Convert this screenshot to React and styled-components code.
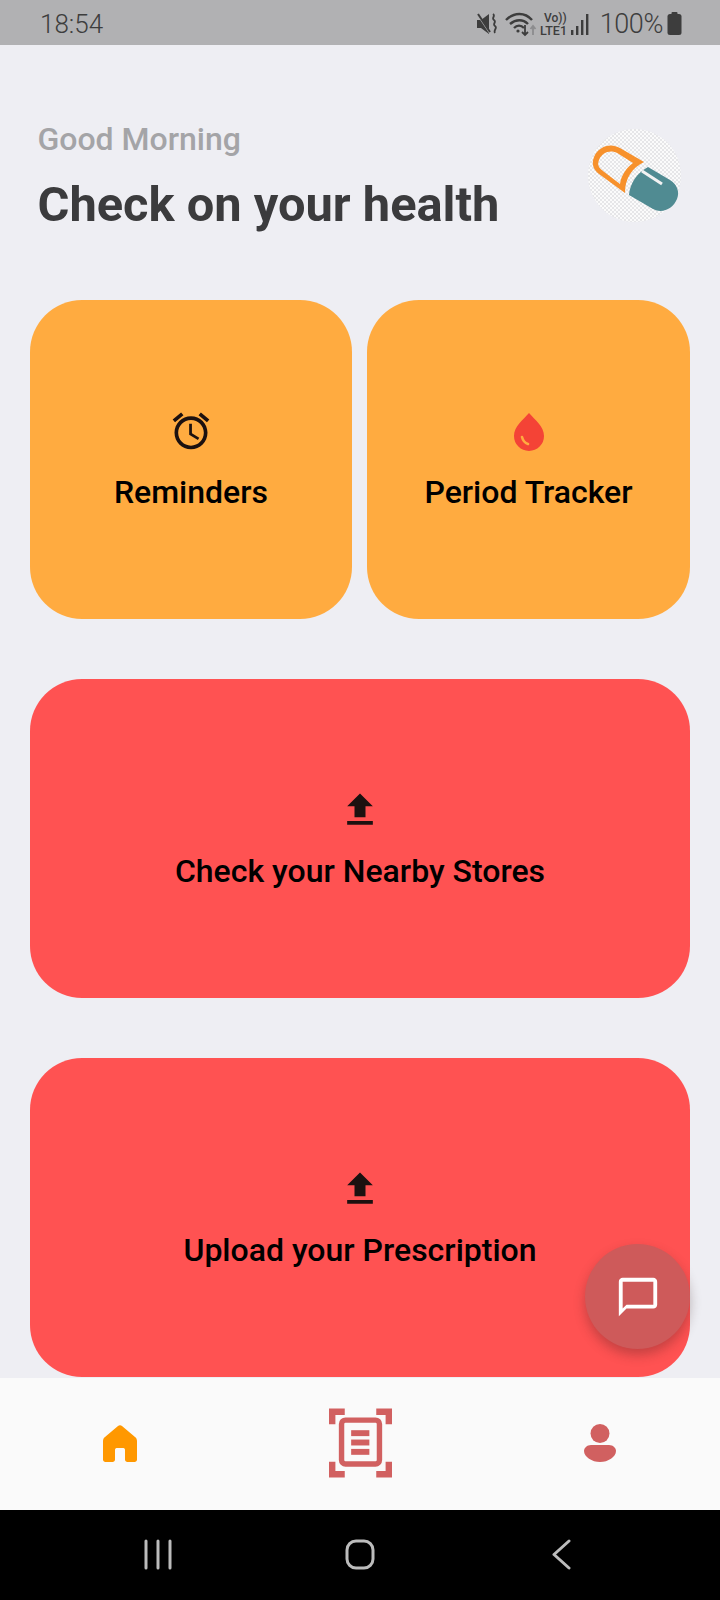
import styled, { createGlobalStyle } from "styled-components";

const GlobalStyle = createGlobalStyle`
  html, body {
    margin: 0;
    padding: 0;
    background: #eeeef3;
  }
  * {
    box-sizing: border-box;
  }
`;

const Phone = styled.div`
  width: 720px;
  height: 1600px;
  display: flex;
  flex-direction: column;
  overflow: hidden;
  font-family: Roboto, "Liberation Sans", sans-serif;
`;

const StatusBar = styled.div`
  height: 45px;
  flex: none;
  background: #b1b1b3;
  color: #3d3d3d;
  display: flex;
  align-items: center;
  justify-content: space-between;
  padding: 2px 38px 0 40px;
  font-weight: 300;
  font-size: 26px;
`;

const StatusIcons = styled.div`
  display: flex;
  align-items: center;
`;

const Percent = styled.span`
  margin: 0 4px 0 11px;
  font-size: 27px;
  letter-spacing: -0.4px;
`;

const Main = styled.main`
  position: relative;
  flex: 1;
  min-height: 0;
  background: #eeeef3;
  padding: 0 30px;
`;

const Header = styled.header`
  height: 255px;
  display: flex;
  justify-content: space-between;
  padding: 76px 9px 0 7.5px;
`;

const Greeting = styled.div`
  font-size: 32px;
  line-height: 36px;
  font-weight: 500;
  color: #a4a4a7;
`;

const Title = styled.h1`
  margin: 19px 0 0;
  font-size: 48.8px;
  line-height: 58px;
  font-weight: 700;
  color: #3b3b3d;
`;

const Avatar = styled.div`
  width: 93px;
  height: 93px;
  margin-top: 8px;
  border-radius: 50%;
  background-color: #f8f8f9;
  background-image: repeating-conic-gradient(#e6e6e8 0 25%, #fbfbfb 0 50%);
  background-size: 4px 4px;
  position: relative;
`;

const Pill = styled.svg`
  position: absolute;
  left: -18px;
  top: -13px;
  width: 120px;
  height: 120px;
`;

const Row = styled.div`
  display: grid;
  grid-template-columns: 322px 323px;
  gap: 15px;
`;

const Card = styled.div`
  height: 319px;
  margin-bottom: ${props => props.$gap || 0}px;
  border-radius: 52px;
  background: ${props => props.$color};
  display: flex;
  flex-direction: column;
  align-items: center;
  justify-content: center;
  color: #000;
`;

const CardIcon = styled.svg`
  width: 44px;
  height: 44px;
  display: block;
  fill: ${props => props.$color || "#1c1110"};
`;

const CardLabel = styled.div`
  margin-top: 21px;
  font-size: 32px;
  line-height: 36px;
  font-weight: 500;
`;

const Fab = styled.button`
  position: absolute;
  right: 30px;
  bottom: 29px;
  width: 105px;
  height: 105px;
  border: 0;
  padding: 0;
  border-radius: 50%;
  background: #ce5a5a;
  box-shadow: 0 6px 12px rgba(60, 30, 30, 0.3);
  display: flex;
  align-items: center;
  justify-content: center;
`;

const BottomNav = styled.nav`
  height: 132px;
  flex: none;
  background: #fafafa;
  display: grid;
  grid-template-columns: repeat(3, 1fr);
  align-items: center;
  justify-items: center;
  padding-bottom: 2px;
`;

const SystemNav = styled.div`
  height: 90px;
  flex: none;
  background: #000;
  display: flex;
  justify-content: space-between;
  align-items: flex-start;
  padding: 29px 144px 0 143px;
`;

const SysIcon = styled.svg`
  width: 30px;
  height: 32px;
  fill: none;
  stroke: #bcbcbc;
  stroke-width: 3;
  stroke-linecap: round;
  stroke-linejoin: round;
`;

const ALARM =
  "M22 5.72l-4.6-3.86-1.29 1.53 4.6 3.86L22 5.72zM7.88 3.39L6.6 1.86 2 5.71l1.29 1.53 4.59-3.85zM12.5 8H11v6l4.75 2.85.75-1.23-4-2.37V8zM12 4c-4.97 0-9 4.03-9 9s4.03 9 9 9 9-4.03 9-9-4.03-9-9-9zm0 16c-3.87 0-7-3.13-7-7s3.13-7 7-7 7 3.13 7 7-3.13 7-7 7z";
const UPLOAD = "M9 16h6v-6h4l-7-7-7 7h4zm-4 2h14v2H5z";
const CHAT =
  "M20 2H4c-1.1 0-2 .9-2 2v18l4-4h14c1.1 0 2-.9 2-2V4c0-1.1-.9-2-2-2zm0 14H6l-2 2V4h16v12z";

function MuteIcon() {
  return (
    <svg width="21" height="24" viewBox="0 0 21 24" fill="none" style={{ marginRight: 8 }}>
      <path d="M1 8h4l8-6v20l-8-6H1z" fill="#3d3d3d" />
      <path d="M2 3l12 18" stroke="#b1b1b3" strokeWidth="2" />
      <path d="M2 2l12 18" stroke="#3d3d3d" strokeWidth="2" />
      <path d="M17 2c3 2-2 4 1 6s-2 4 1 6-2 4 0 7" stroke="#3d3d3d" strokeWidth="1.8" />
    </svg>
  );
}

function WifiIcon() {
  return (
    <svg width="33" height="26" viewBox="0 0 33 26" fill="none" style={{ marginRight: 2 }}>
      <path d="M1 9c8-8 19-8 26 0" stroke="#3d3d3d" strokeWidth="2.4" />
      <path d="M5 13c6-5 13-5 18 0" stroke="#3d3d3d" strokeWidth="2.4" />
      <path d="M9 17c3-3 7-3 10 0" stroke="#3d3d3d" strokeWidth="2.4" />
      <circle cx="13" cy="20" r="1.6" fill="#3d3d3d" />
      <path d="M20 14v10M17 21l3 3 3-3" stroke="#3d3d3d" strokeWidth="1.8" />
      <path d="M28 24V15M25.500 18l2.500-3 2.500 3" stroke="#8c8c8e" strokeWidth="1.8" />
    </svg>
  );
}

function LteIcon() {
  return (
    <svg width="27" height="26" viewBox="0 0 27 26" style={{ marginRight: 3 }}>
      <text x="4" y="11" fontSize="12" fontFamily="Roboto, sans-serif" fontWeight="500" fill="#3d3d3d">Vo))</text>
      <text x="0" y="24" fontSize="12.500" fontFamily="Roboto, sans-serif" fontWeight="500" fill="#3d3d3d">LTE1</text>
    </svg>
  );
}

function SignalIcon() {
  return (
    <svg width="19" height="24" viewBox="0 0 19 24" fill="#3d3d3d">
      <rect x="1" y="18" width="2.400" height="5" />
      <rect x="6" y="14" width="2.400" height="9" />
      <rect x="11" y="8" width="2.400" height="15" />
      <rect x="16" y="2" width="2.400" height="21" />
    </svg>
  );
}

function BatteryIcon() {
  return (
    <svg width="15" height="23" viewBox="0 0 15 23" fill="#3d3d3d">
      <rect x="4.500" y="0" width="6" height="3" rx="1" />
      <rect x="0.500" y="2" width="14" height="21" rx="2.500" />
    </svg>
  );
}

function PillIcon() {
  return (
    <Pill viewBox="0 0 120 120">
      <path
        fillRule="evenodd"
        fill="#f7912c"
        d="M74 46L50 32C40 26 28 31 24 41C21 49 24 54 29 58L55 77C55 62 62 52 74 46ZM63 47L48 37.500C40 33 32 37 29 44C27 49 29 52 33 55L50 68C51 60 56 52 63 47Z"
      />
      <path
        fill="#508b92"
        d="M78 51L100 64C107 68 110 76 107 83C103 93 92 98 83 93L59 79C60 67 67 57 78 51Z"
      />
      <path d="M72 55L92 68" stroke="#f2f2f2" strokeWidth="3" />
    </Pill>
  );
}

function DropIcon() {
  return (
    <CardIcon viewBox="0 0 44 44" $color="#f44336">
      <path d="M22 4C16 11 7 17 7 27A15 15 0 0 0 37 27C37 17 28 11 22 4Z" />
      <path d="M15 28C16 32 18 34 21 35" fill="none" stroke="#ffab40" strokeWidth="2.600" strokeLinecap="round" />
    </CardIcon>
  );
}

function HomeIcon() {
  return (
    <svg width="34" height="37" viewBox="0 0 34 37" fill="#ff9800">
      <path d="M15 1C16.200 0 17.800 0 19 1L32 12C33.400 13 34 14.500 34 16V34.500C34 36 33 37 31.500 37H24.500C23 37 22 36 22 34.500V25C22 24 21.500 23 20.500 23H13.500C12.500 23 12 24 12 25V34.500C12 36 11 37 9.500 37H2.500C1 37 0 36 0 34.500V16C0 14.500 .6 13 2 12Z" />
    </svg>
  );
}

function ScanIcon() {
  return (
    <svg width="63" height="70" viewBox="0 0 64 70" fill="none">
      <g fill="#d16060">
        <path d="M0 0H16V6.500H6.500V16H0Z" />
        <path d="M64 0H48V6.500H57.500V16H64Z" />
        <path d="M0 70H16V63.500H6.500V54H0Z" />
        <path d="M64 70H48V63.500H57.500V54H64Z" />
        <rect x="22.500" y="22" width="18.500" height="6" />
        <rect x="22.500" y="31.500" width="18.500" height="6" />
        <rect x="22.500" y="41" width="18.500" height="6" />
      </g>
      <rect x="12.750" y="11.750" width="38.500" height="44.500" rx="4" stroke="#d16060" strokeWidth="5.500" />
    </svg>
  );
}

function PersonIcon() {
  return (
    <svg width="32" height="38" viewBox="0 0 32 38" fill="#d16060">
      <circle cx="16" cy="9.500" r="9.500" />
      <path d="M7 21H25C29 21 32 24 32 27C32 33 24 38 16 38C8 38 0 33 0 27C0 24 3 21 7 21Z" />
    </svg>
  );
}

export default function App() {
  return (
    <Phone>
      <GlobalStyle />
      <StatusBar>
        <span>18:54</span>
        <StatusIcons>
          <MuteIcon />
          <WifiIcon />
          <LteIcon />
          <SignalIcon />
          <Percent>100%</Percent>
          <BatteryIcon />
        </StatusIcons>
      </StatusBar>

      <Main>
        <Header>
          <div>
            <Greeting>Good Morning</Greeting>
            <Title>Check on your health</Title>
          </div>
          <Avatar>
            <PillIcon />
          </Avatar>
        </Header>

        <Row>
          <Card $color="#ffab40" $gap={60}>
            <CardIcon viewBox="0 0 24 24">
              <path d={ALARM} />
            </CardIcon>
            <CardLabel>Reminders</CardLabel>
          </Card>
          <Card $color="#ffab40" $gap={60}>
            <DropIcon />
            <CardLabel>Period Tracker</CardLabel>
          </Card>
        </Row>

        <Card $color="#ff5252" $gap={60}>
          <CardIcon viewBox="0 0 24 24">
            <path d={UPLOAD} />
          </CardIcon>
          <CardLabel>Check your Nearby Stores</CardLabel>
        </Card>

        <Card $color="#ff5252">
          <CardIcon viewBox="0 0 24 24">
            <path d={UPLOAD} />
          </CardIcon>
          <CardLabel>Upload your Prescription</CardLabel>
        </Card>

        <Fab aria-label="Chat">
          <svg width="46" height="46" viewBox="0 0 24 24" fill="#fff">
            <path d={CHAT} />
          </svg>
        </Fab>
      </Main>

      <BottomNav>
        <HomeIcon />
        <ScanIcon />
        <PersonIcon />
      </BottomNav>

      <SystemNav>
        <SysIcon viewBox="0 0 30 32">
          <path d="M3 2V29M15 2V29M27 2V29" />
        </SysIcon>
        <SysIcon viewBox="0 0 30 32">
          <rect x="2" y="2" width="26" height="27" rx="9" />
        </SysIcon>
        <SysIcon viewBox="0 0 30 32">
          <path d="M23 2L8 15.500L23 29" />
        </SysIcon>
      </SystemNav>
    </Phone>
  );
}
